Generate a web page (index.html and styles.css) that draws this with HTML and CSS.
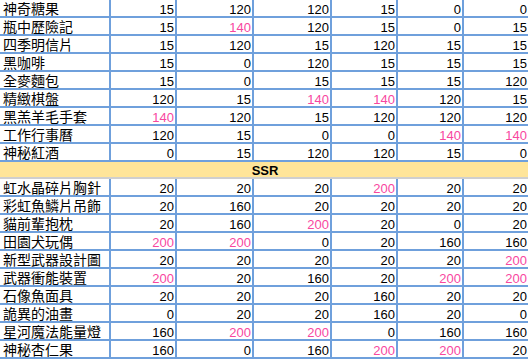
FILE: index.html
```html
<!DOCTYPE html>
<html lang="zh-Hant">
<head>
    <meta charset="UTF-8">
    <meta name="viewport" content="width=device-width, initial-scale=1.0">
    <title>禮物好感度</title>
    <link rel="stylesheet" href="styles.css">
</head>
<body>
    <table class="sheet">
        <colgroup>
            <col class="col-name">
            <col class="col-a">
            <col class="col-b">
            <col class="col-c">
            <col class="col-d">
            <col class="col-e">
            <col class="col-f">
        </colgroup>
        <tbody>
            <tr><td class="name">神奇糖果</td><td>15</td><td>120</td><td>120</td><td>15</td><td>0</td><td>0</td></tr>
            <tr><td class="name">瓶中歷險記</td><td>15</td><td class="hot">140</td><td>120</td><td>15</td><td>0</td><td>15</td></tr>
            <tr><td class="name">四季明信片</td><td>15</td><td>120</td><td>15</td><td>120</td><td>15</td><td>15</td></tr>
            <tr><td class="name">黑咖啡</td><td>15</td><td>0</td><td>120</td><td>15</td><td>15</td><td>15</td></tr>
            <tr><td class="name">全麥麵包</td><td>15</td><td>0</td><td>15</td><td>15</td><td>15</td><td>120</td></tr>
            <tr><td class="name">精緻棋盤</td><td>120</td><td>15</td><td class="hot">140</td><td class="hot">140</td><td>120</td><td>15</td></tr>
            <tr><td class="name">黑羔羊毛手套</td><td class="hot">140</td><td>120</td><td>15</td><td>120</td><td>120</td><td>120</td></tr>
            <tr><td class="name">工作行事曆</td><td>120</td><td>15</td><td>0</td><td>0</td><td class="hot">140</td><td class="hot">140</td></tr>
            <tr><td class="name">神秘紅酒</td><td>0</td><td>15</td><td>120</td><td>120</td><td>15</td><td>0</td></tr>

            <tr class="rank"><td colspan="7">SSR</td></tr>

            <tr><td class="name">虹水晶碎片胸針</td><td>20</td><td>20</td><td>20</td><td class="hot">200</td><td>20</td><td>20</td></tr>
            <tr><td class="name">彩虹魚鱗片吊飾</td><td>20</td><td>160</td><td>20</td><td>20</td><td>20</td><td>20</td></tr>
            <tr><td class="name">貓前輩抱枕</td><td>20</td><td>160</td><td class="hot">200</td><td>20</td><td>0</td><td>20</td></tr>
            <tr><td class="name">田園犬玩偶</td><td class="hot">200</td><td class="hot">200</td><td>0</td><td>20</td><td>160</td><td>160</td></tr>
            <tr><td class="name">新型武器設計圖</td><td>20</td><td>20</td><td>20</td><td>20</td><td>20</td><td class="hot">200</td></tr>
            <tr><td class="name">武器衝能裝置</td><td class="hot">200</td><td>20</td><td>160</td><td>20</td><td class="hot">200</td><td class="hot">200</td></tr>
            <tr><td class="name">石像魚面具</td><td>20</td><td>20</td><td>20</td><td>160</td><td>20</td><td>20</td></tr>
            <tr><td class="name">詭異的油畫</td><td>0</td><td>20</td><td>20</td><td>160</td><td>20</td><td>0</td></tr>
            <tr><td class="name">星河魔法能量燈</td><td>160</td><td class="hot">200</td><td class="hot">200</td><td>0</td><td>160</td><td>160</td></tr>
            <tr><td class="name">神秘杏仁果</td><td>160</td><td>0</td><td>160</td><td class="hot">200</td><td class="hot">200</td><td>20</td></tr>
        </tbody>
    </table>
</body>
</html>
```

FILE: styles.css
```css
html, body {
    overflow: hidden;
}
body {
    margin: 0;
    background-color: #fff;
    color: #000;
    font-family: "Liberation Sans", "Noto Sans CJK TC", Arial, sans-serif;
    font-size: 13px;
}
.sheet {
    width: 530px;
    table-layout: fixed;
    border-collapse: separate;
    border-spacing: 0;
}
.col-name { width: 111px; }
.col-a { width: 66px; }
.col-b { width: 77px; }
.col-c { width: 78px; }
.col-d { width: 66px; }
.col-e { width: 66px; }
.col-f { width: 66px; }
.sheet td {
    box-sizing: border-box;
    padding: 3px 1px 0 0;
    line-height: 13px;
    text-align: right;
    white-space: nowrap;
    overflow: hidden;
    border-right: 2px solid #6fa0dc;
    border-bottom: 2px solid #6fa0dc;
}
.sheet td.name {
    padding-left: 3px;
    text-align: left;
    font-size: 14px;
}
.sheet td.hot {
    color: #f8479f;
}
/* rarity divider row */
.rank td {
    padding: 2px 0 0;
    text-align: center;
    font-weight: bold;
    background-color: #ffe599;
    border-right: none;
    border-bottom: 2px solid #cfcfcf;
}
```
